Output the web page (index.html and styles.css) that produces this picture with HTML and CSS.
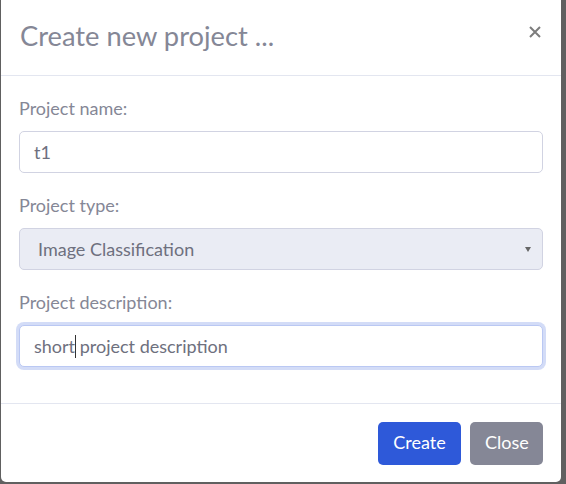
FILE: index.html
```html
<!DOCTYPE html>
<html lang="en">
<head>
<meta charset="utf-8">
<title>Create new project</title>
<link rel="stylesheet" href="styles.css">
</head>
<body>
<div class="modal">
  <div class="modal-header">
    <h5 class="modal-title">Create new project ...</h5>
    <button class="close" aria-label="Close">
      <svg width="12" height="12" viewBox="0 0 12 12"><path d="M1 1L11 11M11 1L1 11" stroke="#7d7d7d" stroke-width="2" fill="none"/></svg>
    </button>
  </div>
  <div class="modal-body">
    <div class="form-group">
      <label class="label">Project name:</label>
      <div class="input">t1</div>
    </div>
    <div class="form-group">
      <label class="label">Project type:</label>
      <div class="input select">Image Classification<span class="arrow"></span></div>
    </div>
    <div class="form-group last">
      <label class="label">Project description:</label>
      <div class="input focus">short<span class="caret"></span> project description</div>
    </div>
  </div>
  <div class="modal-footer">
    <button class="btn btn-primary">Create</button>
    <button class="btn btn-secondary">Close</button>
  </div>
</div>
</body>
</html>
```
FILE: styles.css
```css
html, body {
  margin: 0;
  padding: 0;
  background: #606060;
  height: 484px;
  overflow: hidden;
}
body {
  padding-left: 1px;
  font-family: "Lato", "Noto Sans", sans-serif;
  color: #858796;
}
.modal {
  width: 560px;
  height: 487px;
  margin-top: -5px;
  background: #fff;
  border-radius: 5px;
  display: flex;
  flex-direction: column;
  box-sizing: border-box;
}
.modal-header {
  height: 82px;
  box-sizing: border-box;
  padding: 0 19px 0 19px;
  border-bottom: 1px solid #e3e6f0;
  display: flex;
  align-items: center;
  justify-content: space-between;
}
.modal-title {
  margin: 0;
  font-size: 27.3px;
  font-weight: 400;
  color: #858796;
}
.close {
  border: 0;
  background: none;
  padding: 0;
  margin-right: 1px;
  margin-top: -7px;
  width: 12px;
  height: 12px;
  display: block;
}
.close svg { display: block; }
.modal-body {
  padding: 19px 18px 36px 18px;
}
.form-group {
  margin-bottom: 19px;
}
.form-group.last { margin-bottom: 0; }
.label {
  display: block;
  font-size: 18px;
  line-height: 26px;
  margin-bottom: 10px;
}
.input {
  height: 42px;
  box-sizing: border-box;
  border: 1px solid #d1d3e2;
  border-radius: 5px;
  padding: 0 14px;
  font-size: 18px;
  line-height: 40px;
  color: #6e707e;
  background: #fff;
  white-space: nowrap;
}
.select {
  background: #eaecf4;
  padding-left: 18px;
  position: relative;
}
.arrow {
  position: absolute;
  right: 11px;
  top: 18px;
  width: 0;
  height: 0;
  border-left: 3.5px solid transparent;
  border-right: 3.5px solid transparent;
  border-top: 5px solid #666;
}
.focus {
  border-color: #bac8f3;
  box-shadow: 0 0 0 3px rgba(78, 115, 223, 0.25);
}
.caret {
  display: inline-block;
  width: 1px;
  height: 23px;
  background: #333;
  margin-right: -1px;
  vertical-align: -5px;
}
.modal-footer {
  margin-top: auto;
  border-top: 1px solid #e3e6f0;
  padding: 18px 18px 17px;
  display: flex;
  justify-content: flex-end;
  gap: 9px;
}
.btn {
  height: 43px;
  border: 0;
  border-radius: 5px;
  font-family: inherit;
  font-size: 18px;
  color: #fff;
  padding: 0 15px 3px;
}
.btn-primary { background: #2e59d9; width: 83px; }
.btn-secondary { background: #858796; width: 73px; }
```
